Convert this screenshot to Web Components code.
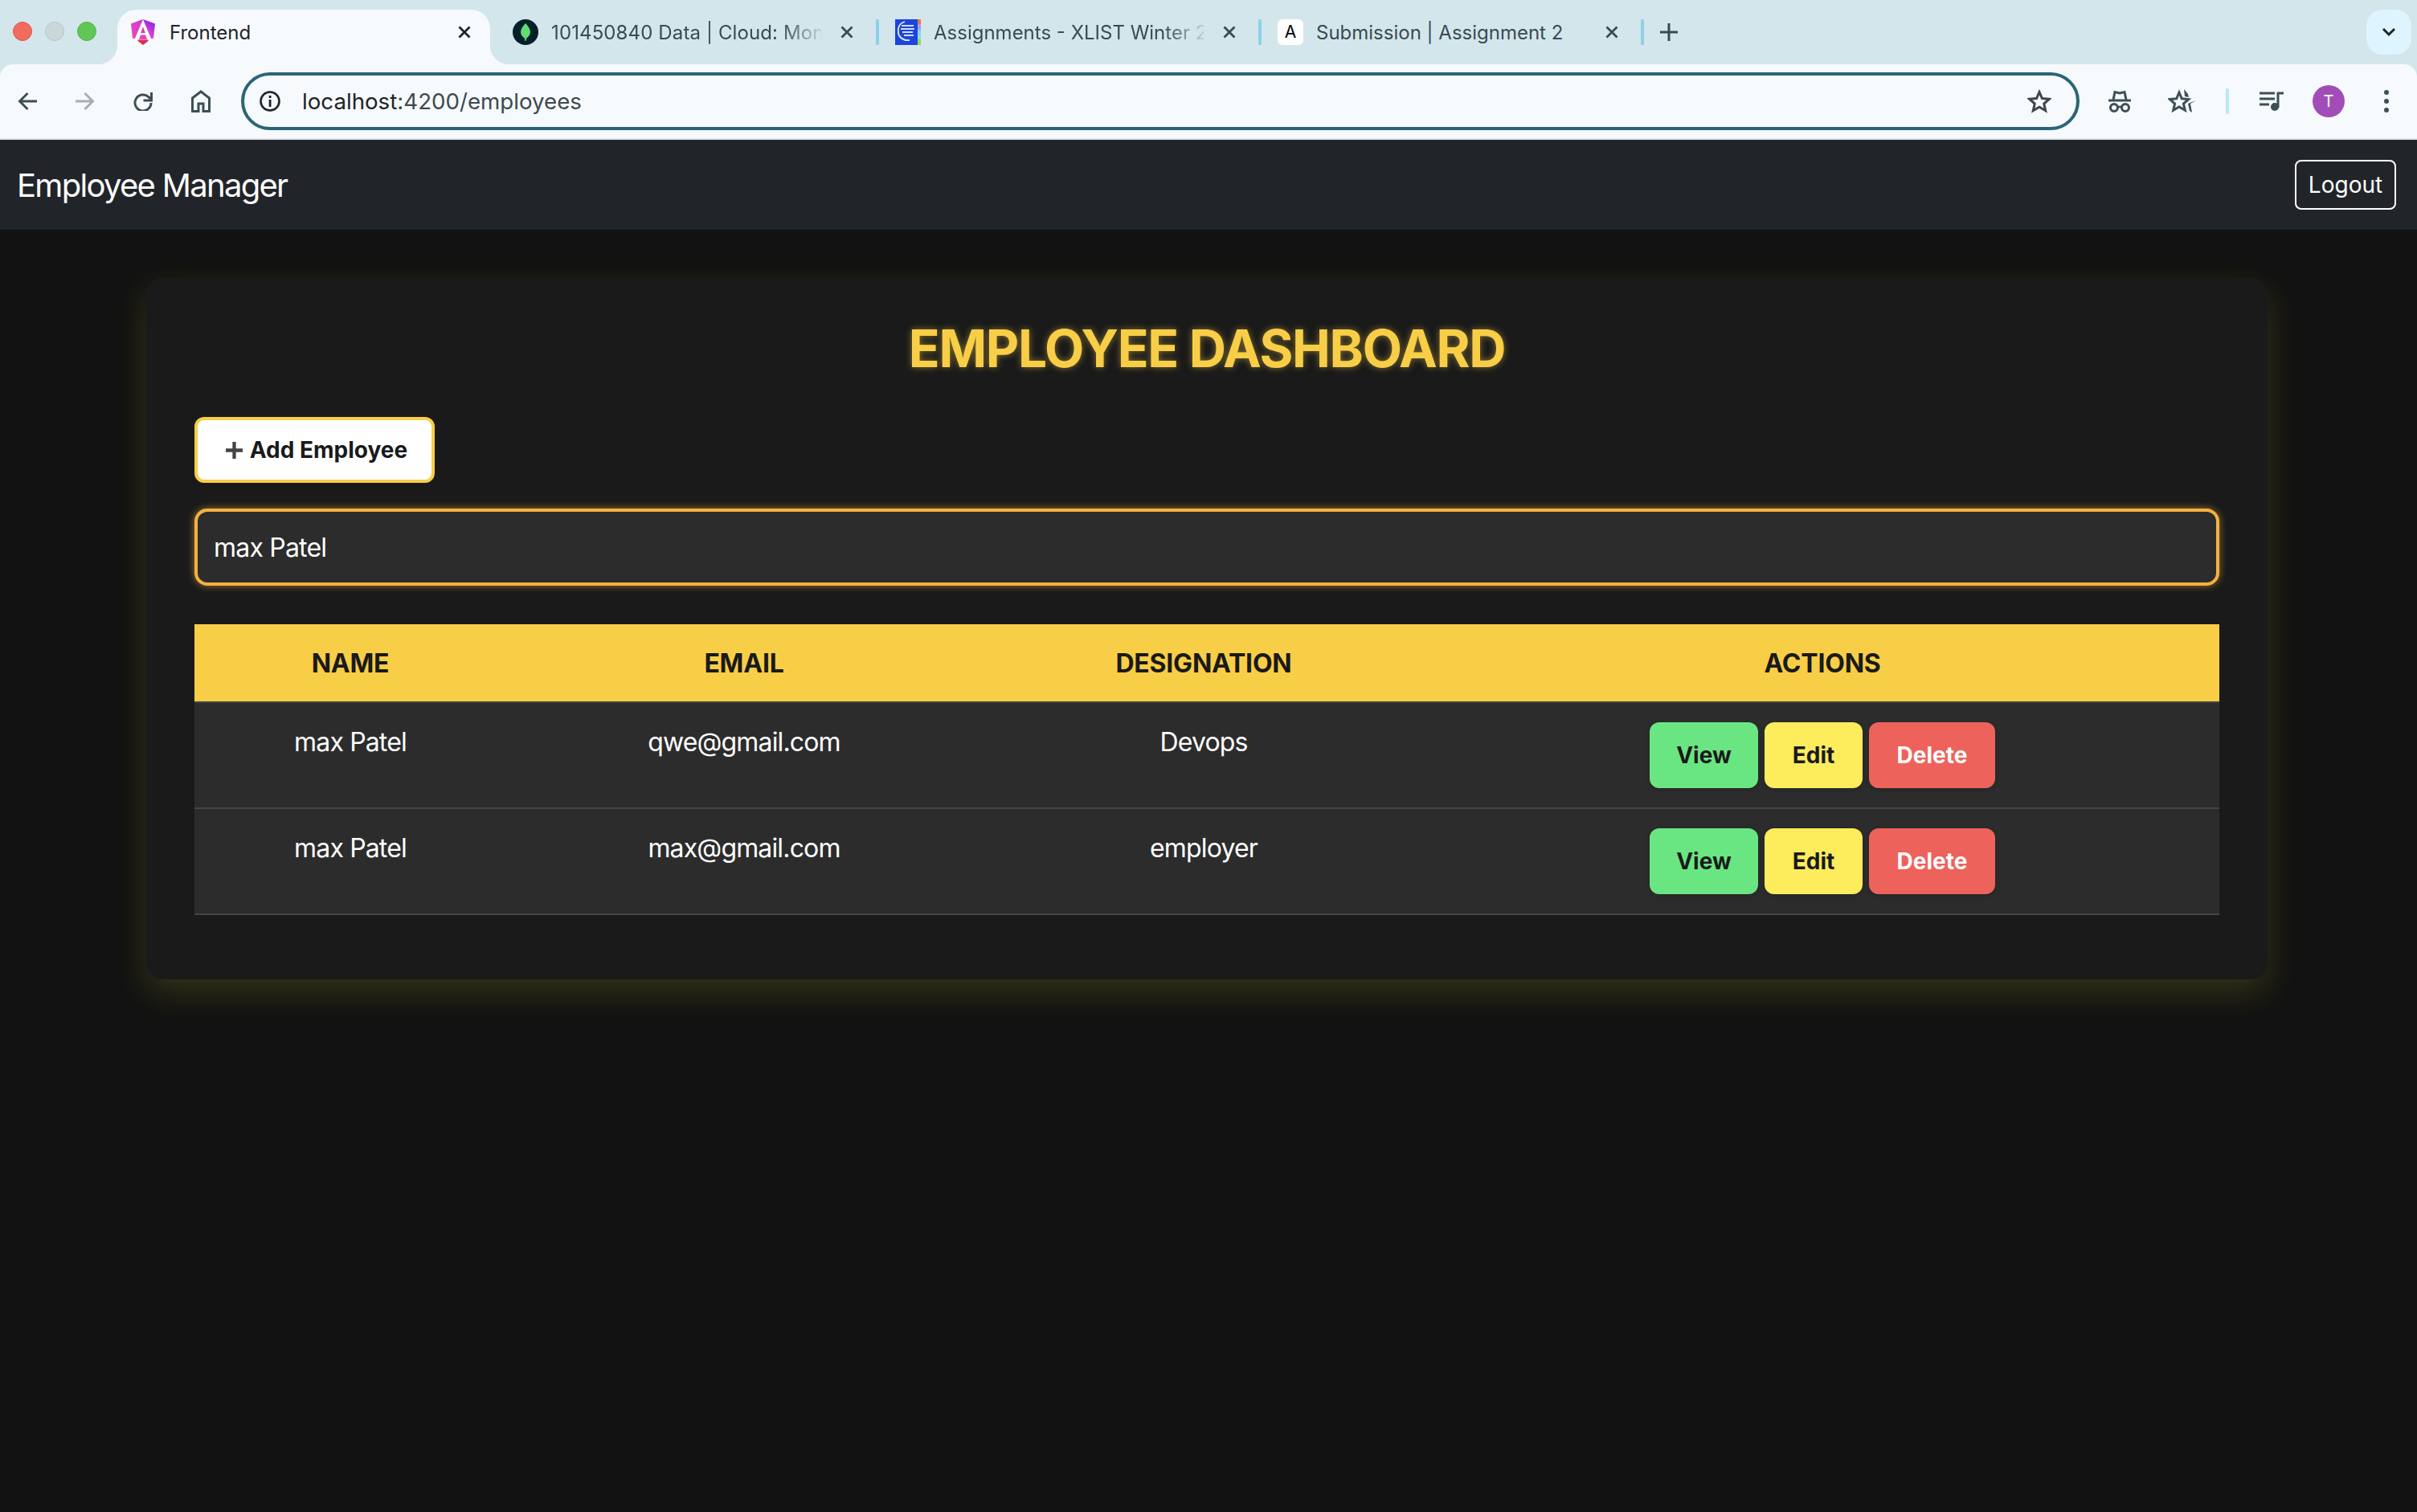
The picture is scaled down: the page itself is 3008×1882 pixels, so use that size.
<!doctype html>
<html>
<head>
<meta charset="utf-8">
<title>Employee Manager</title>
<style>
html,body{margin:0;background:#121212;}
body{width:3008px;min-height:1882px;font-family:Inter,"Liberation Sans",sans-serif;}
</style>
</head>
<body>
<browser-chrome></browser-chrome>
<app-navbar></app-navbar>
<emp-dashboard></emp-dashboard>
<script>
const ICONS={
  angular:`<svg width="30" height="32" viewBox="0 0 30 32"><defs><linearGradient id="ng" x1="0" y1="1" x2="1" y2="0"><stop offset="0" stop-color="#f04bb0"/><stop offset=".55" stop-color="#d63fd0"/><stop offset="1" stop-color="#7a1cf0"/></linearGradient></defs><path d="M15 0 30 5.500 28 23.500 22 25H8l-6-1.500L0 5.500z" fill="url(#ng)"/><path d="M15 0 4.500 25H10l2-5.500h6l2 5.500h5.500z" fill="#f7fafd"/><path d="M15 9.500 12.200 17h5.600z" fill="#d93aa8"/><path d="M8.500 25.500h13v1.500L15 32l-6.500-5z" fill="#e02a52"/></svg>`,
  leaf:`<svg width="32" height="32" viewBox="0 0 32 32"><circle cx="16" cy="16" r="16" fill="#04202b"/><path d="M16 5c3.500 3.500 6 7.500 6 11 0 3.500-2.500 6-4.800 7.500L16.500 27h-1l-.7-3.500C12.500 22 10 19.500 10 16c0-3.500 2.500-7.500 6-11z" fill="#62dc70"/></svg>`,
  lms:`<svg width="32" height="32" viewBox="0 0 32 32"><rect width="32" height="32" fill="#1c45dd"/><rect x="28" width="4" height="6" fill="#e8793a"/><rect x="28" y="6" width="4" height="7" fill="#a89bea"/><rect x="28" y="13" width="4" height="7" fill="#8ecdf0"/><rect x="28" y="20" width="4" height="5" fill="#8fe0c8"/><rect x="28" y="25" width="4" height="7" fill="#8fd94a"/><path d="M12 3C5 5 3 11 4 17c1 6 7 10 14 9" fill="none" stroke="#e7eeff" stroke-width="1.800"/><path d="M8 8h15M7 12h17M9 16h13M11 20h12" stroke="#cfdcff" stroke-width="2"/></svg>`,
  close:`<svg width="16" height="16" viewBox="0 0 16 16"><path d="M1.500 1.500l13 13M14.500 1.500l-13 13" stroke="currentColor" stroke-width="2.800" fill="none"/></svg>`,
  back:`<svg width="24" height="24" viewBox="0 0 24 24"><path d="M24 12H3M12.500 2 2.500 12l10 10" fill="none" stroke="currentColor" stroke-width="3"/></svg>`,
  forward:`<svg width="24" height="24" viewBox="0 0 24 24"><path d="M0 12h21M11.500 2l10 10-10 10" fill="none" stroke="currentColor" stroke-width="3"/></svg>`,
  reload:`<svg width="24" height="24" viewBox="0 0 24 24"><path d="M22 14a10 10 0 1 1-3.200-7.400L22 9.500" fill="none" stroke="currentColor" stroke-width="3"/><path d="M22.500 1v10h-10" fill="none" stroke="currentColor" stroke-width="3"/></svg>`,
  home:`<svg width="24" height="28" viewBox="0 0 24 28"><path d="M1.500 26.500V10L12 2l10.500 8v16.500H15V17H9v9.500z" fill="none" stroke="currentColor" stroke-width="3"/></svg>`,
  info:`<svg width="26" height="26" viewBox="0 0 26 26"><circle cx="13" cy="13" r="11.500" fill="none" stroke="#1f2326" stroke-width="2.600"/><rect x="11.700" y="11" width="2.800" height="9" fill="#1f2326"/><rect x="11.700" y="6" width="2.800" height="3" fill="#1f2326"/></svg>`,
  star:`<svg width="30" height="30" viewBox="0 0 30 30"><path d="M15 3.500l3.500 8 8.800.8-6.600 5.800 2 8.600L15 22.200l-7.700 4.500 2-8.600-6.600-5.800 8.800-.8z" fill="none" stroke="currentColor" stroke-width="3"/></svg>`,
  spy:`<svg width="28" height="28" viewBox="0 0 28 28"><path d="M0 13h28" stroke="currentColor" stroke-width="3"/><path d="M6 12 8 2.500l6 1.500 6-1.500L22 12" fill="none" stroke="currentColor" stroke-width="3"/><circle cx="7" cy="22" r="4.500" fill="none" stroke="currentColor" stroke-width="3"/><circle cx="21" cy="22" r="4.500" fill="none" stroke="currentColor" stroke-width="3"/><path d="M11 21h6" stroke="currentColor" stroke-width="2.500"/></svg>`,
  stars:`<svg width="35" height="30" viewBox="0 0 35 30"><path d="M14 4l3.300 7.800 8.400.8-6.300 5.500 1.900 8.200L14 22l-7.300 4.300 1.900-8.200L2.300 12.600l8.400-.8z" fill="none" stroke="currentColor" stroke-width="3"/><path d="M20 0l5 6 1 4-5-1z" fill="currentColor"/><path d="M35 14l-7 4 2 11-3-2-2-9z" fill="currentColor"/></svg>`,
  queue:`<svg width="30" height="24" viewBox="0 0 30 24"><path d="M0 2h19M0 9h19M0 16h12" stroke="currentColor" stroke-width="3"/><path d="M23 20V2h7" fill="none" stroke="currentColor" stroke-width="3"/><circle cx="19" cy="19" r="5" fill="currentColor"/></svg>`,
  kebab:`<svg width="8" height="28" viewBox="0 0 8 28"><circle cx="4" cy="3" r="3" fill="currentColor"/><circle cx="4" cy="14" r="3" fill="currentColor"/><circle cx="4" cy="25" r="3" fill="currentColor"/></svg>`,
  chevron:`<svg width="18" height="12" viewBox="0 0 18 12"><path d="M2 2l7 7 7-7" fill="none" stroke="currentColor" stroke-width="3"/></svg>`,
  plus:`<svg width="24" height="24" viewBox="0 0 24 24"><path d="M12 1v22M1 12h22" stroke="currentColor" stroke-width="3"/></svg>`,
  plusBold:`<svg width="21" height="21" viewBox="0 0 22 22"><path d="M11 0v22M0 11h22" stroke="currentColor" stroke-width="4.500"/></svg>`
};

class ChromeTab extends HTMLElement {
  connectedCallback(){
    const icon=this.getAttribute('icon');
    const root=this.attachShadow({mode:'open'});
    const iconHtml=icon=='letter'?`<span class="letter">A</span>`:ICONS[icon];
    root.innerHTML=`
    <style>
    :host{display:flex;align-items:center;box-sizing:border-box;height:56px;width:472px;padding:0 28px 0 20px;color:#3c4a50;font:24px Inter,"Liberation Sans",sans-serif;position:relative;flex:none;}
    :host([first]){width:480px;padding-left:28px;letter-spacing:.12px;}
    :host([active]){height:68px;background:#f6fafd;border-radius:24px 24px 0 0;color:#1f2326;width:464px;padding:0 24px 12px 17px;}
    :host([active])::before,:host([active])::after{content:"";position:absolute;bottom:0;width:24px;height:24px;}
    :host([active])::before{left:-24px;background:radial-gradient(circle at 0 0,transparent 24px,#f6fafd 24.5px);}
    :host([active])::after{right:-24px;background:radial-gradient(circle at 100% 0,transparent 24px,#f6fafd 24.5px);}
    .ic{height:32px;display:flex;align-items:center;flex:none;}
    .letter{display:block;width:32px;height:32px;background:#fff;border-radius:6px;color:#000;font-size:21px;line-height:32px;text-align:center;}
    .t{flex:1;margin-left:16px;white-space:nowrap;overflow:hidden;}
    :host([active]) .t{margin-left:18px;}
    :host([fade]) .t{-webkit-mask-image:linear-gradient(90deg,#000 85%,rgba(0,0,0,.12) 100%);mask-image:linear-gradient(90deg,#000 85%,rgba(0,0,0,.12) 100%);}
    .x{display:flex;color:#3c4a50;margin-left:24px;}
    :host([active]) .x{color:#1f2326;}
    </style>
    <span class="ic">${iconHtml}</span><span class="t"><slot></slot></span><span class="x">${ICONS.close}</span>`;
  }
}
customElements.define('chrome-tab',ChromeTab);

class BrowserChrome extends HTMLElement {
  constructor(){
    super();
    const root=this.attachShadow({mode:'open'});
    root.innerHTML=`
    <style>
    :host{display:block;font-family:Inter,"Liberation Sans",sans-serif;background:#d3e6ec;}
    .strip{height:80px;display:flex;align-items:flex-start;padding-top:12px;box-sizing:border-box;position:relative;}
    .lights{display:flex;gap:16px;width:146px;padding:15px 0 0 16px;box-sizing:border-box;flex:none;}
    .lights i{width:24px;height:24px;border-radius:50%;display:block;box-sizing:border-box;}
    .tabs{display:flex;flex:1;align-items:flex-start;}
    .sep{width:4px;height:32px;background:#8fd0e6;border-radius:1px;margin-top:12px;flex:none;}
    .plus{margin:16px 0 0 19px;color:#3c4a50;display:flex;}
    .drop{position:absolute;right:7px;top:12px;width:56px;height:56px;border-radius:20px;background:#def4ff;display:flex;align-items:center;justify-content:center;color:#1f2326;}
    .bar{height:94px;box-sizing:border-box;background:#f6fafd;display:flex;align-items:center;border-bottom:2px solid #e3e6e8;border-radius:16px 16px 0 0;}
    .nav{display:flex;width:300px;flex:none;box-sizing:border-box;padding-left:22px;gap:48px;color:#3c4f57;align-items:center;}
    .nav span{display:flex;}
    .nav .off{color:#a9aeb1;}
    .url{width:2288px;height:72px;box-sizing:border-box;border:4px solid #2a6577;border-radius:36px;display:flex;align-items:center;padding:0 31px 0 19px;font-size:27.7px;color:#3f4a4f;flex:none;}
    .url b{font-weight:400;color:#1f2326;}
    .url .addr{margin-left:27px;flex:1;}
    .url .st{color:#3f4549;display:flex;}
    .ext{display:flex;align-items:center;color:#3c4f57;flex:1;padding-left:36px;}
    .vl{width:4px;height:32px;background:#b9e6f8;border-radius:2px;margin:0 38px 0 37px;}
    .avatar{width:40px;height:40px;border-radius:50%;background:#a24db7;color:#fff;font-size:20px;display:flex;align-items:center;justify-content:center;margin:0 48px 0 36px;}
    </style>
    <div class="strip">
      <div class="lights"><i style="background:#f26b5e;border:1px solid #e0574b"></i><i style="background:#ccd7dc;border:1px solid #b8c3c8"></i><i style="background:#60c655;border:1px solid #52b548"></i></div>
      <div class="tabs">
        <chrome-tab active icon="angular">Frontend</chrome-tab>
        <chrome-tab first fade icon="leaf">101450840 Data | Cloud: MongoDB Cloud</chrome-tab>
        <span class="sep"></span>
        <chrome-tab fade icon="lms">Assignments - XLIST Winter 2025</chrome-tab>
        <span class="sep"></span>
        <chrome-tab icon="letter">Submission | Assignment 2</chrome-tab>
        <span class="sep"></span>
        <span class="plus">${ICONS.plus}</span>
      </div>
      <div class="drop">${ICONS.chevron}</div>
    </div>
    <div class="bar">
      <div class="nav"><span>${ICONS.back}</span><span class="off">${ICONS.forward}</span><span>${ICONS.reload}</span><span>${ICONS.home}</span></div>
      <div class="url">${ICONS.info}<span class="addr"><b>localhost</b>:4200/employees</span><span class="st">${ICONS.star}</span></div>
      <div class="ext">${ICONS.spy}<span style="width:46px"></span>${ICONS.stars}<span class="vl"></span>${ICONS.queue}<span class="avatar">T</span>${ICONS.kebab}</div>
    </div>`;
  }
}
customElements.define('browser-chrome',BrowserChrome);

class AppNavbar extends HTMLElement {
  constructor(){
    super();
    this.attachShadow({mode:'open'}).innerHTML=`
    <style>
    :host{display:flex;height:112px;background:#212529;align-items:center;justify-content:space-between;padding:0 26px 0 21px;box-sizing:border-box;color:#fff;}
    .brand{font-size:40px;letter-spacing:-1.700px;}
    .out{border:2px solid #fff;border-radius:8px;height:62px;width:126px;box-sizing:border-box;display:flex;align-items:center;justify-content:center;font-size:28px;}
    </style>
    <span class="brand">Employee Manager</span><span class="out">Logout</span>`;
  }
}
customElements.define('app-navbar',AppNavbar);

class ActionButton extends HTMLElement {
  constructor(){
    super();
    this.attachShadow({mode:'open'}).innerHTML=`
    <style>
    :host{display:flex;height:82px;align-items:center;justify-content:center;box-sizing:border-box;border-radius:12px;font-size:28px;font-weight:700;color:#1a1a1a;box-shadow:0 2px 6px rgba(0,0,0,.15);}
    :host([kind=view]){background:#69e681;width:135px;}
    :host([kind=edit]){background:#fdec5c;width:122px;}
    :host([kind=del]){background:#ee625c;color:#fff;width:157px;}
    </style><slot></slot>`;
  }
}
customElements.define('action-button',ActionButton);

class EmpRow extends HTMLElement {
  constructor(){
    super();
    this.attachShadow({mode:'open'}).innerHTML=`
    <style>
    :host{display:grid;grid-template-columns:388px 592px 552px 1fr;background:#2c2c2c;border-bottom:2px solid #444;color:#fff;font-size:32px;line-height:48px;text-align:center;letter-spacing:-.85px;}
    :host([head]){background:#f9ce47;color:#1a1a1a;font-weight:700;letter-spacing:-.2px;}
    ::slotted(div){padding:25px 0 23px;}
    </style><slot></slot>`;
  }
}
customElements.define('emp-row',EmpRow);

class EmpActions extends HTMLElement {
  constructor(){
    super();
    this.attachShadow({mode:'open'}).innerHTML=`
    <style>
    :host{display:flex;justify-content:center;gap:8px;padding:24px 0;line-height:normal;letter-spacing:0;}
    </style>
    <action-button kind="view">View</action-button><action-button kind="edit">Edit</action-button><action-button kind="del">Delete</action-button>`;
  }
}
customElements.define('emp-actions',EmpActions);

class EmpDashboard extends HTMLElement {
  constructor(){
    super();
    const rows=[['max Patel','qwe@gmail.com','Devops'],['max Patel','max@gmail.com','employer']];
    this.attachShadow({mode:'open'}).innerHTML=`
    <style>
    :host{display:block;padding:60px 186px 0 182px;}
    .card{background:#1a1a1a;border-radius:20px;padding:60px 60px 80px;box-shadow:0 16px 40px rgba(255,235,59,.15);}
    h1{margin:0 0 57px;font-size:64px;line-height:56px;font-weight:700;letter-spacing:-1.300px;color:#f9ce47;text-align:center;text-shadow:0 0 8px rgba(249,206,71,.5);}
    .add{display:inline-flex;vertical-align:top;align-items:center;box-sizing:border-box;height:82px;width:299px;justify-content:center;gap:9px;padding-left:5px;background:#fff;border:4px solid #f9ce47;border-radius:12px;color:#1a1a1a;font-size:28px;font-weight:700;}
    .add svg{color:#444;}
    .search{box-sizing:border-box;height:96px;margin:32px 0 48px;background:#2c2c2c;border:4px solid #f4b13f;border-radius:16px;color:#fff;font-size:32px;letter-spacing:-.8px;display:flex;align-items:center;padding:0 20px;box-shadow:0 0 10px rgba(244,177,63,.6);}
    </style>
    <div class="card">
      <h1>EMPLOYEE DASHBOARD</h1>
      <div class="add">${ICONS.plusBold}<span>Add Employee</span></div>
      <div class="search">max Patel</div>
      <emp-row head><div>NAME</div><div>EMAIL</div><div>DESIGNATION</div><div>ACTIONS</div></emp-row>
      ${rows.map(r=>`<emp-row><div>${r[0]}</div><div>${r[1]}</div><div>${r[2]}</div><emp-actions></emp-actions></emp-row>`).join('')}
    </div>`;
  }
}
customElements.define('emp-dashboard',EmpDashboard);
</script>
</body>
</html>
